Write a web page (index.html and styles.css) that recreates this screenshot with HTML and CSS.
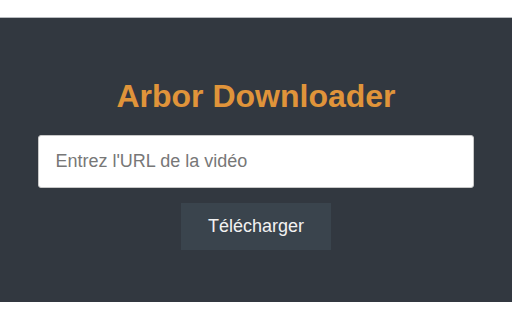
FILE: index.html
```html
<!DOCTYPE html>
<html lang="fr">
<head>
<meta charset="utf-8">
<title>Arbor Downloader</title>
<link rel="stylesheet" href="styles.css">
</head>
<body>
<main class="panel">
  <h1 class="title">Arbor Downloader</h1>
  <input class="url" type="text" placeholder="Entrez l'URL de la vidéo">
  <button class="download" type="button">Télécharger</button>
</main>
</body>
</html>
```
FILE: styles.css
```css
html, body {
  margin: 0;
  padding: 0;
  background: #ffffff;
  font-family: "Liberation Sans", Arial, sans-serif;
}
body {
  padding-top: 17px;
}
.panel {
  height: 285px;
  box-sizing: border-box;
  background: #323840;
  border-top: 1px solid #b9bcc0;
  display: flex;
  flex-direction: column;
  align-items: center;
  padding-top: 60px;
}
.title {
  margin: 0;
  font-size: 32px;
  line-height: 37px;
  font-weight: bold;
  color: #e0943a;
}
.url {
  margin-top: 20px;
  width: 85%;
  height: 53px;
  box-sizing: border-box;
  border: 1px solid #c8c8c8;
  border-radius: 3px;
  padding: 0 16px;
  font-family: "Liberation Sans", Arial, sans-serif;
  font-size: 18px;
  color: #333;
  background: #fff;
  outline: none;
}
.url::placeholder {
  color: #777;
}
.download {
  margin-top: 15px;
  width: 150px;
  height: 47px;
  border: none;
  border-radius: 0;
  background: #3a444d;
  color: #f2f2f2;
  font-family: "Liberation Sans", Arial, sans-serif;
  font-size: 18px;
  padding: 0;
}
```
